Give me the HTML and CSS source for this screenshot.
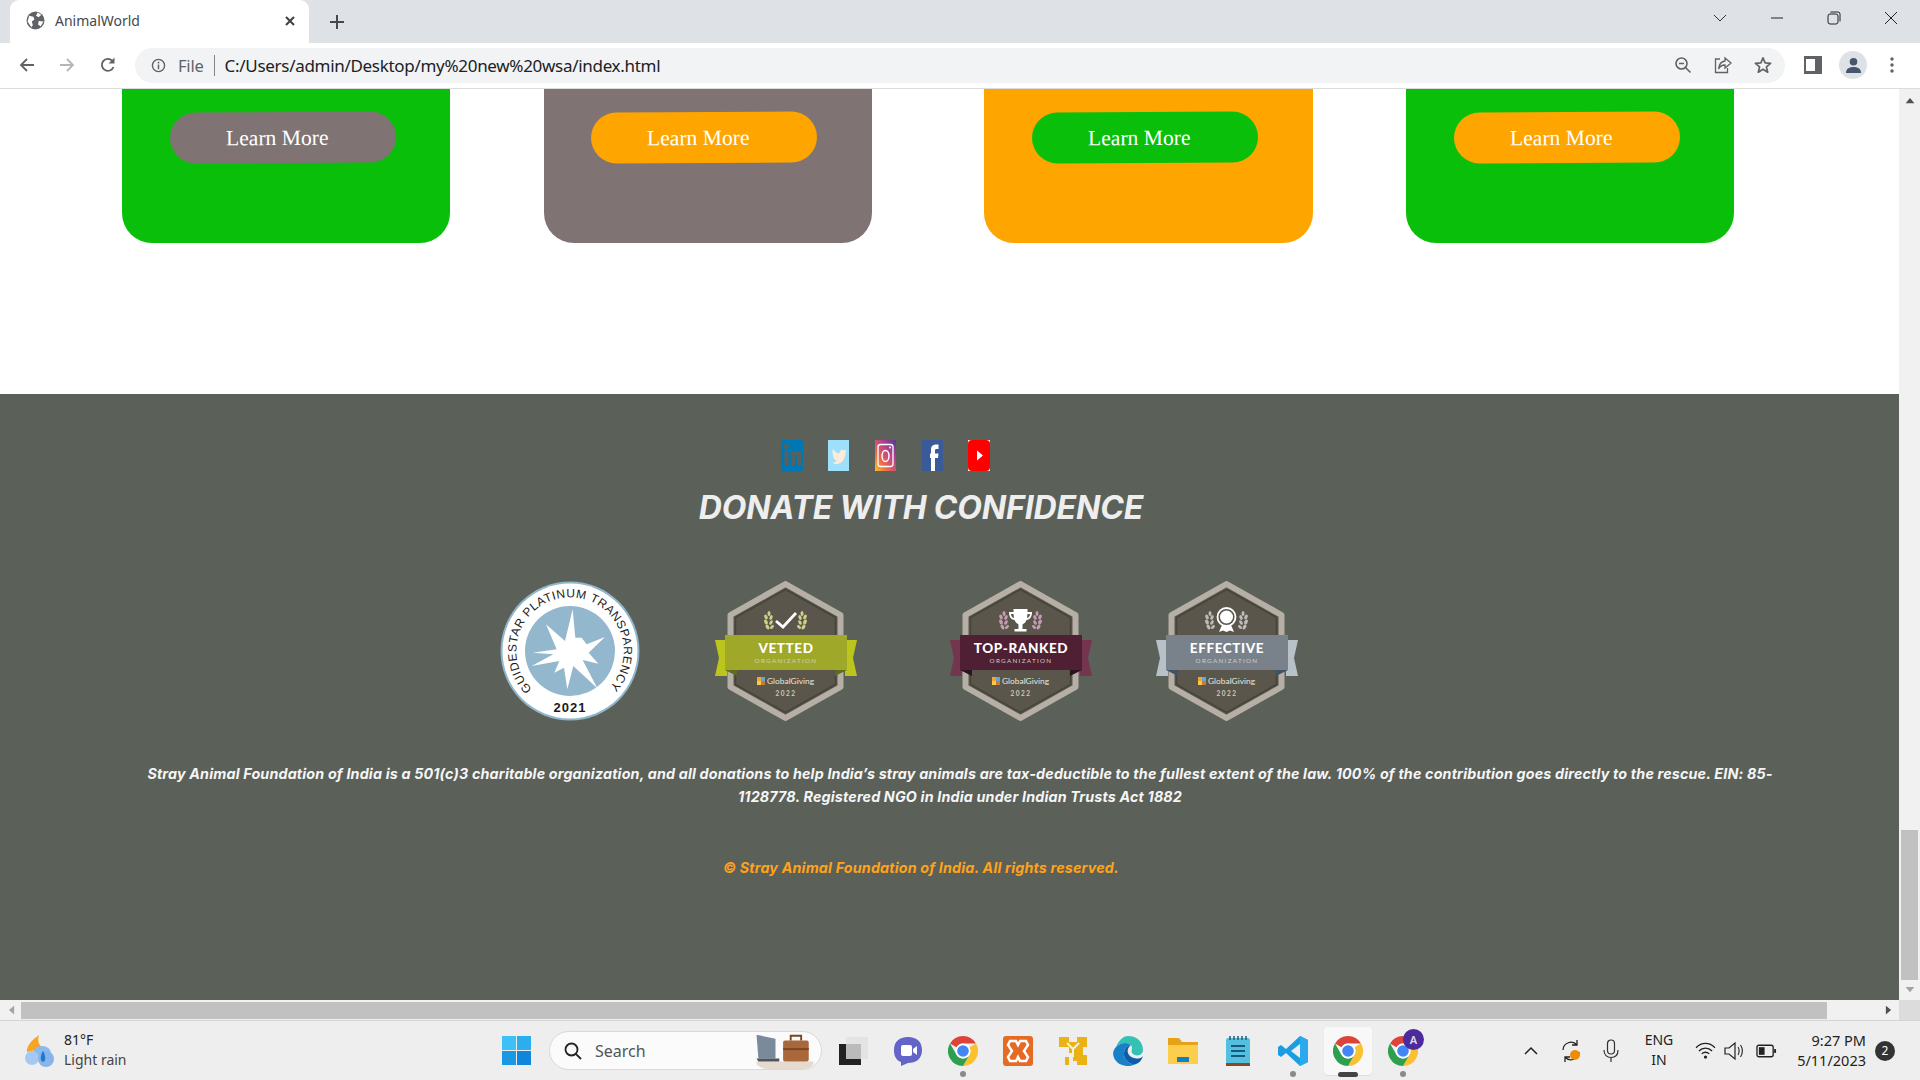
FILE: index.html
```html
<!DOCTYPE html>
<html lang="en">
<head>
<meta charset="utf-8">
<title>AnimalWorld</title>
<link rel="stylesheet" href="styles.css">
</head>
<body>
<svg class="defs" width="0" height="0" aria-hidden="true">
  <defs>
    <symbol id="chrome" viewBox="0 0 30 30">
      <path d="M15 0A15 15 0 0 1 28 7.500H15A7.500 7.500 0 0 0 8.500 11.300L2 7.500A15 15 0 0 1 15 0Z" fill="#db4437"/>
      <path d="M28 7.500A15 15 0 0 1 15 30L21.500 18.800A7.500 7.500 0 0 0 21.500 11.300Z" fill="#fbc02d"/>
      <path d="M2 7.500L8.500 18.800A7.500 7.500 0 0 0 21.500 18.800L15 30A15 15 0 0 1 2 7.500Z" fill="#2e9e4f"/>
      <circle cx="15" cy="15" r="7.500" fill="#fff"/>
      <circle cx="15" cy="15" r="5.800" fill="#4285f4"/>
    </symbol>
    <symbol id="laurel" viewBox="0 0 11 21">
      <g fill="currentColor">
        <ellipse cx="6" cy="2.500" rx="1.500" ry="2.500"/>
        <ellipse cx="3" cy="6" rx="1.600" ry="2.600" transform="rotate(-25 3 6)"/>
        <ellipse cx="8" cy="6.500" rx="1.500" ry="2.500" transform="rotate(25 8 6.500)"/>
        <ellipse cx="3" cy="11" rx="1.700" ry="2.700" transform="rotate(-25 3 11)"/>
        <ellipse cx="8" cy="11.500" rx="1.500" ry="2.500" transform="rotate(30 8 11.500)"/>
        <ellipse cx="4.500" cy="16" rx="1.700" ry="2.700" transform="rotate(-30 4.500 16)"/>
        <ellipse cx="9" cy="16" rx="1.400" ry="2.300" transform="rotate(45 9 16)"/>
      </g>
    </symbol>
    <symbol id="hex" viewBox="0 0 142 140">
      <path d="M70.500 3L125.500 34V106L70.500 137L15.500 106V34Z" fill="#5a564b" stroke="#b5afa6" stroke-width="6" stroke-linejoin="round"/>
      <path d="M70.500 8.500L120.500 36.500V103.500L70.500 131.500L20.500 103.500V36.500Z" fill="none" stroke="#45453c" stroke-width="1.500"/>
    </symbol>
    <symbol id="gg" viewBox="0 0 8 8">
      <rect width="4" height="4" fill="#f4a52c"/>
      <rect x="4" width="4" height="4" fill="#6ea2c9"/>
      <rect y="4" width="4" height="4" fill="#f6c94a"/>
      <rect x="4" y="4" width="4" height="4" fill="#c9793a"/>
    </symbol>
  </defs>
</svg>

<div class="screen">
  <header class="tabstrip">
    <div class="tab">
      <svg class="favicon" viewBox="0 0 18 18"><circle cx="9" cy="9" r="8.500" fill="#5f6368"/><path d="M3 4.500L7 5.500L8 8L5.500 10L6.500 13.500L5 15.500L1.500 10ZM11 1.500L14.500 3.500L12 6L9.500 4.500ZM12 9.500L16.500 10L14 14.500L11.500 13Z" fill="#fff"/></svg>
      <span class="tab-title">AnimalWorld</span>
      <svg class="tab-close" viewBox="0 0 12 12"><path d="M2 2L10 10M10 2L2 10" stroke="#3c4043" stroke-width="2"/></svg>
    </div>
    <svg class="newtab" viewBox="0 0 16 16"><path d="M8 1V15M1 8H15" stroke="#45494d" stroke-width="2"/></svg>
    <div class="winctrls">
      <svg class="winicon chev" viewBox="0 0 14 14"><path d="M1 4L7 10L13 4" fill="none" stroke="#333" stroke-width="1"/></svg>
      <svg class="winicon" viewBox="0 0 14 14"><path d="M1 7H13" stroke="#222" stroke-width="1"/></svg>
      <svg class="winicon" viewBox="0 0 14 14"><rect x="1" y="3" width="10" height="10" rx="2" fill="none" stroke="#222"/><path d="M3.500 1H11A2 2 0 0 1 13 3V10.500" fill="none" stroke="#222"/></svg>
      <svg class="winicon" viewBox="0 0 14 14"><path d="M1 1L13 13M13 1L1 13" stroke="#222" stroke-width="1"/></svg>
    </div>
  </header>

  <nav class="toolbar">
    <svg class="navicon" viewBox="0 0 18 18"><path d="M16 9H3M9 3L3 9L9 15" fill="none" stroke="#5f6368" stroke-width="1.800"/></svg>
    <svg class="navicon navicon-fwd" viewBox="0 0 18 18"><path d="M2 9H15M9 3L15 9L9 15" fill="none" stroke="#b4b7ba" stroke-width="1.800"/></svg>
    <svg class="navicon navicon-reload" viewBox="0 0 18 18"><path d="M14.500 11A6 6 0 1 1 13.300 4.800" fill="none" stroke="#5f6368" stroke-width="1.800"/><path d="M15.500 1.500V7.500H9.500Z" fill="#5f6368"/></svg>
    <div class="omnibox">
      <svg class="info" viewBox="0 0 16 16"><circle cx="8" cy="8" r="6.500" fill="none" stroke="#5f6368" stroke-width="1.500"/><path d="M8 7V12M8 4V5.800" stroke="#5f6368" stroke-width="1.600"/></svg>
      <span class="file-label">File</span>
      <span class="omni-sep"></span>
      <span class="url">C:/Users/admin/Desktop/my%20new%20wsa/index.html</span>
      <div class="omni-actions">
        <svg class="omniicon" viewBox="0 0 18 18"><circle cx="7.500" cy="7.500" r="5.500" fill="none" stroke="#5f6368" stroke-width="1.600"/><path d="M5 7.500H10M11.500 11.500L16.500 16.500" stroke="#5f6368" stroke-width="1.600"/></svg>
        <svg class="omniicon" viewBox="0 0 18 18"><path d="M6 3H1.500V16.500H13.500V12" fill="none" stroke="#5f6368" stroke-width="1.300"/><path d="M11 2L17 7L11 12V9C8 9 6 10 4.500 13C5 8.500 7.500 5.500 11 5Z" fill="none" stroke="#5f6368" stroke-width="1.300"/></svg>
        <svg class="omniicon" viewBox="0 0 18 18"><path d="M9 1.800L11.100 6.900L16.600 7.300L12.400 10.800L13.700 16.200L9 13.300L4.300 16.200L5.600 10.800L1.400 7.300L6.900 6.900Z" fill="none" stroke="#5f6368" stroke-width="1.700" stroke-linejoin="round"/></svg>
      </div>
    </div>
    <div class="tool-actions">
      <svg class="sidepanel" viewBox="0 0 18 18"><rect width="18" height="18" fill="#5f6368"/><rect x="2" y="3" width="9" height="12" fill="#fff"/></svg>
      <div class="avatar"><svg viewBox="0 0 18 18" class="avatar-icon"><circle cx="9" cy="5" r="4" fill="#47556f"/><path d="M1 17C1 12 5 10.500 9 10.500S17 12 17 17Z" fill="#47556f"/></svg></div>
      <svg class="kebab" viewBox="0 0 4 16"><circle cx="2" cy="2" r="1.700" fill="#5f6368"/><circle cx="2" cy="8" r="1.700" fill="#5f6368"/><circle cx="2" cy="14" r="1.700" fill="#5f6368"/></svg>
    </div>
  </nav>

  <div class="viewport">
    <main class="page">
      <section class="cards">
        <article class="card card-green card-a"><a class="btn btn-gray">Learn More</a></article>
        <article class="card card-gray card-b"><a class="btn btn-orange">Learn More</a></article>
        <article class="card card-orange card-c"><a class="btn btn-green">Learn More</a></article>
        <article class="card card-green card-d"><a class="btn btn-orange">Learn More</a></article>
      </section>

      <footer class="footer">
        <div class="socials">
          <svg class="social" viewBox="0 0 22 31"><rect width="22" height="31" rx="2" fill="#0077b5"/><rect x="3.500" y="11" width="4" height="15" fill="#5b6059"/><circle cx="5.500" cy="6.500" r="2.500" fill="#5b6059"/><path d="M10 11H14V13C15 11.500 16.500 10.800 18 11C20 11.400 20.500 13 20.500 15V26H16.500V16.500C16.500 15 14 15 14 16.500V26H10Z" fill="#5b6059"/></svg>
          <svg class="social" viewBox="0 0 21 31" preserveAspectRatio="none"><rect width="21" height="31" fill="#9edffb"/><path d="M5 9C7 12 9.500 13.500 11.500 13.500C11.500 10.500 14.500 8.500 16.500 10.500L18.500 9.500L17.500 12C17.500 18 14.500 24 8.500 24C6.500 24 5.500 23.500 4.500 22.500C6 22.500 7.500 22 8.500 21C6.500 20 5 17 5 15.500C4.500 13 4 11 5 9Z" fill="#fcebd9"/></svg>
          <svg class="social" viewBox="0 0 21 31" preserveAspectRatio="none">
            <defs><linearGradient id="iggrad" x1="0" y1="1" x2="1" y2="0"><stop offset="0" stop-color="#fdc11e"/><stop offset=".3" stop-color="#ee6a4d"/><stop offset=".65" stop-color="#b7418e"/><stop offset="1" stop-color="#4f3c98"/></linearGradient></defs>
            <rect width="21" height="31" fill="url(#iggrad)"/><rect x="3" y="4.500" width="15" height="22" rx="2.500" fill="none" stroke="#fff" stroke-width="1.300"/><ellipse cx="10.500" cy="16" rx="3.500" ry="5.500" fill="none" stroke="#fff" stroke-width="1.500"/><circle cx="15" cy="7.500" r="1" fill="#fff"/>
          </svg>
          <svg class="social" viewBox="0 0 21 31" preserveAspectRatio="none"><rect width="21" height="31" fill="#3b5a9a"/><path d="M9 31V18H8V13.500H9V9.500C9 6 11 4 16.500 4.500V9H14.500C13.500 9 13 9.500 13 10.500V13.500H16.500L16 18H13V31Z" fill="#fff"/></svg>
          <svg class="social social-yt" viewBox="0 0 22 31"><rect width="22" height="31" fill="#fff"/><rect width="22" height="31" rx="4" fill="#f00"/><path d="M9 10.500L15 15.500L9 20.500Z" fill="#fff"/></svg>
        </div>

        <h2 class="donate">DONATE WITH CONFIDENCE</h2>

        <div class="badges">
          <svg class="badge badge-guide" viewBox="0 0 140 140">
            <circle cx="70" cy="70" r="69.500" fill="#8fb6cb"/>
            <circle cx="70" cy="70" r="67.500" fill="#fff"/>
            <circle cx="70" cy="70" r="45" fill="#93b7cd"/>
            <path id="guidearc" d="M32 108A53.700 53.700 0 1 1 108 108" fill="none"/>
            <text class="guide-ring"><textPath href="#guidearc" textLength="250">GUIDESTAR PLATINUM TRANSPARENCY</textPath></text>
            <text class="guide-year" x="70" y="131" text-anchor="middle">2021</text>
            <polygon transform="translate(-10 -11.670) scale(.3333)" fill="#fff" points="248,120 256,205 275,205 290,225 345,203 296,250 325,283 278,272 322,357 250,290 232,360 222,295 193,310 208,275 125,290 190,255 128,250 200,240 168,165 225,215"/>
          </svg>

          <svg class="badge badge-vetted" viewBox="0 0 142 140">
            <use href="#hex" width="142" height="140"/>
            <use href="#laurel" x="48" y="30" width="11" height="21" class="laurel-gold"/>
            <use href="#laurel" x="82" y="30" width="11" height="21" class="laurel-gold" transform="matrix(-1 0 0 1 175 0)"/>
            <path d="M61 40L68 46L81 32" fill="none" stroke="#fff" stroke-width="2.800"/>
            <polygon points="0,59 12,59 12,95 0,95 4,77" fill="#bcc41e"/>
            <polygon points="142,59 130,59 130,95 142,95 138,77" fill="#bcc41e"/>
            <polygon points="10,89 22,89 22,95" fill="#5f6b1d"/>
            <polygon points="132,89 120,89 120,95" fill="#5f6b1d"/>
            <rect x="10" y="54" width="122" height="35" fill="#a0a82a"/>
            <text class="b-title" x="71" y="72" text-anchor="middle">VETTED</text>
            <text class="b-org" x="71" y="82" text-anchor="middle">ORGANIZATION</text>
            <use href="#gg" x="42" y="96" width="8" height="8"/>
            <text class="b-gg" x="52" y="103">GlobalGiving</text>
            <text class="b-year" x="71" y="115" text-anchor="middle">2022</text>
          </svg>

          <svg class="badge badge-top" viewBox="0 0 142 140">
            <use href="#hex" width="142" height="140"/>
            <use href="#laurel" x="48" y="30" width="11" height="21" class="laurel-pink"/>
            <use href="#laurel" x="82" y="30" width="11" height="21" class="laurel-pink" transform="matrix(-1 0 0 1 175 0)"/>
            <path d="M63.500 28H77.500V31H82C82 36 80 38.500 76.500 39C75.500 42 73 43 72.500 43.500V48H76.500V50.500H64.500V48H68.500V43.500C68 43 65.500 42 64.500 39C61 38.500 59 36 59 31H63.500ZM61 33C61 35 62 36.500 64 37L63.500 33ZM80 33H77.500L77 37C79 36.500 80 35 80 33Z" fill="#fff" fill-rule="evenodd"/>
            <polygon points="0,59 12,59 12,95 0,95 4,77" fill="#74354e"/>
            <polygon points="142,59 130,59 130,95 142,95 138,77" fill="#74354e"/>
            <polygon points="10,89 22,89 22,95" fill="#2d1220"/>
            <polygon points="132,89 120,89 120,95" fill="#2d1220"/>
            <rect x="10" y="54" width="122" height="35" fill="#4f2033"/>
            <text class="b-title" x="71" y="72" text-anchor="middle">TOP-RANKED</text>
            <text class="b-org" x="71" y="82" text-anchor="middle">ORGANIZATION</text>
            <use href="#gg" x="42" y="96" width="8" height="8"/>
            <text class="b-gg" x="52" y="103">GlobalGiving</text>
            <text class="b-year" x="71" y="115" text-anchor="middle">2022</text>
          </svg>

          <svg class="badge badge-eff" viewBox="0 0 142 140">
            <use href="#hex" width="142" height="140"/>
            <use href="#laurel" x="48" y="30" width="11" height="21" class="laurel-gray"/>
            <use href="#laurel" x="82" y="30" width="11" height="21" class="laurel-gray" transform="matrix(-1 0 0 1 175 0)"/>
            <path d="M66 44L63 51L67 49.500L70.500 51L74 49.500L78 51L75 44Z" fill="#fff"/>
            <circle cx="70.500" cy="36" r="9" fill="none" stroke="#fff" stroke-width="1.800"/>
            <circle cx="70.500" cy="36" r="6.500" fill="#fff"/>
            <polygon points="0,59 12,59 12,95 0,95 4,77" fill="#b8c1c8"/>
            <polygon points="142,59 130,59 130,95 142,95 138,77" fill="#b8c1c8"/>
            <polygon points="10,89 22,89 22,95" fill="#3f5366"/>
            <polygon points="132,89 120,89 120,95" fill="#3f5366"/>
            <rect x="10" y="54" width="122" height="35" fill="#79828b"/>
            <text class="b-title" x="71" y="72" text-anchor="middle">EFFECTIVE</text>
            <text class="b-org" x="71" y="82" text-anchor="middle">ORGANIZATION</text>
            <use href="#gg" x="42" y="96" width="8" height="8"/>
            <text class="b-gg" x="52" y="103">GlobalGiving</text>
            <text class="b-year" x="71" y="115" text-anchor="middle">2022</text>
          </svg>
        </div>

        <p class="legal">Stray Animal Foundation of India is a 501(c)3 charitable organization, and all donations to help India’s stray animals are tax-deductible to the fullest extent of the law. 100% of the contribution goes directly to the rescue. EIN: 85-1128778. Registered NGO in India under Indian Trusts Act 1882</p>
        <p class="copyright">© Stray Animal Foundation of India. All rights reserved.</p>
      </footer>
    </main>

    <aside class="vscroll">
      <svg class="vbtn" viewBox="0 0 12 8"><path d="M6 1L11 7H1Z" fill="#505050"/></svg>
      <div class="vthumb"></div>
      <svg class="vbtn" viewBox="0 0 12 8"><path d="M6 7L11 1H1Z" fill="#a3a3a3"/></svg>
    </aside>
  </div>

  <div class="hscroll">
    <svg class="hbtn" viewBox="0 0 8 12"><path d="M1 6L7 1V11Z" fill="#a3a3a3"/></svg>
    <div class="hthumb"></div>
    <svg class="hbtn hbtn-r" viewBox="0 0 8 12"><path d="M7 6L1 1V11Z" fill="#505050"/></svg>
    <div class="corner"></div>
  </div>

  <div class="taskbar">
    <div class="weather">
      <svg class="weather-icon" viewBox="0 0 30 32">
        <path d="M14 0C8 4 1 11 2 17L20 13C14 12 12 6 14 0Z" fill="#f6a623"/>
        <ellipse cx="17" cy="18" rx="9" ry="7" fill="#8cb9ee"/>
        <circle cx="7" cy="23" r="7" fill="#a6c8f3"/>
        <circle cx="21" cy="24" r="8" fill="#88b4ea"/>
        <path d="M18 16C15 21 15 26 18 27C21 26 21 21 18 16Z" fill="#1f77d0"/>
      </svg>
      <div class="weather-text"><span>81°F</span><span>Light rain</span></div>
    </div>

    <svg class="winlogo" viewBox="0 0 29 29"><rect width="14" height="14" fill="#3cc0f5"/><rect x="15" width="14" height="14" fill="#2aaeee"/><rect y="15" width="14" height="14" fill="#1b98e4"/><rect x="15" y="15" width="14" height="14" fill="#0e86dc"/></svg>

    <div class="search">
      <svg class="search-icon" viewBox="0 0 18 18"><circle cx="7.500" cy="7.500" r="6" fill="none" stroke="#222" stroke-width="1.800"/><path d="M11.800 11.800L17 17" stroke="#222" stroke-width="1.800"/></svg>
      <span class="search-label">Search</span>
      <svg class="search-art" viewBox="0 0 60 40">
        <path d="M0 31H60V34C56 39 50 39 46 39H14C8 39 4 38 0 34Z" fill="#e4dacd"/>
        <path d="M0 3L20 7V28H2Z" fill="#7a8a9a"/><path d="M0 28H24V31H2Z" fill="#50565e"/>
        <rect x="28" y="9" width="27" height="22" rx="2" fill="#a8683c"/><path d="M36 9V4H47V9" fill="none" stroke="#7a4522" stroke-width="2"/><rect x="28" y="17" width="27" height="2" fill="#7a4522"/>
      </svg>
    </div>

    <div class="apps">
      <div class="app"><svg class="ico" viewBox="0 0 30 30"><rect x="8" y="1" width="22" height="22" fill="#e4e4e4"/><rect x="1" y="8" width="22" height="21" fill="#222"/><rect x="8" y="8" width="15" height="15" fill="#bbb"/></svg></div>
      <div class="app"><svg class="ico" viewBox="0 0 30 30"><path d="M15 1C24 1 29 6 29 14C29 23 23 27 15 27L8 30V26C3 24 1 20 1 14C1 6 6 1 15 1Z" fill="#6264c7"/><rect x="8" y="9" width="11" height="11" rx="2" fill="#fff"/><path d="M20 13L24 10V19L20 16Z" fill="#fff"/></svg></div>
      <div class="app app-dot"><svg class="ico"><use href="#chrome"/></svg></div>
      <div class="app"><svg class="ico" viewBox="0 0 30 30"><rect width="30" height="30" rx="3" fill="#e56a24"/><path d="M7 5H13L15 9L17 5H23L25 9L21 15L25 21L23 25H17L15 21L13 25H7L5 21L9 15L5 9Z" fill="none" stroke="#fff" stroke-width="2.500"/></svg></div>
      <div class="app"><svg class="ico" viewBox="0 0 30 30"><path d="M1 1H11V6H19V1H29V11H25V19H29V29H19V25H15V17H11V11H1Z" fill="#eab217"/><path d="M7 21H11V29H7Z" fill="#eab217"/><path d="M9 7L15 13L21 7M15 13V21" stroke="#f7f3d8" stroke-width="2" fill="none"/></svg></div>
      <div class="app"><svg class="ico" viewBox="0 0 30 30"><path d="M15 0C24 0 30 6 30 14C30 20 22 21 19 17C18 14 20 12 18 9C15 6 8 6 3 11C6 4 10 0 15 0Z" fill="#35c1b4"/><path d="M3 11C8 6 15 6 18 9C14 9 11 13 11 18C11 24 16 29 23 28C18 31 9 31 4 26C-1 21 -1 15 3 11Z" fill="#1a7fc9"/><path d="M11 18C11 24 16 29 23 28C26 27 29 24 30 20C27 24 19 23 16 19C14 16 14 12 18 9C14 9 11 13 11 18Z" fill="#0c5ea8"/></svg></div>
      <div class="app"><svg class="ico" viewBox="0 0 30 30"><path d="M0 2H11L14 6H30V28H0Z" fill="#e6a31a"/><path d="M0 9H30V28H0Z" fill="#fdce4c"/><rect x="9" y="21" width="12" height="5" fill="#0f7fd0"/></svg></div>
      <div class="app"><svg class="ico" viewBox="0 0 30 30"><rect x="3" y="2" width="24" height="26" rx="2" fill="#55bfe0"/><rect x="3" y="27" width="24" height="3" fill="#8a4a1f"/><path d="M7 0V4M11 0V4M15 0V4M19 0V4M23 0V4" stroke="#2a5a70" stroke-width="1.500"/><path d="M8 10H22M8 15H22M8 20H22" stroke="#175a7c" stroke-width="2"/></svg></div>
      <div class="app app-dot"><svg class="ico" viewBox="0 0 30 30"><path d="M22 0L30 4V26L22 30L8 17L3 21L0 19V11L3 9L8 13Z" fill="#1b9de2"/><path d="M22 0L30 4V26L22 30Z" fill="#2aa9ee"/><path d="M22 8L13 15L22 22Z" fill="#eeeeee"/></svg></div>
      <div class="app app-active"><svg class="ico"><use href="#chrome"/></svg></div>
      <div class="app app-dot app-badged"><svg class="ico"><use href="#chrome"/></svg><span class="pbadge">A</span></div>
    </div>

    <div class="tray">
      <svg class="tray-chev" viewBox="0 0 14 10"><path d="M1 8L7 2L13 8" fill="none" stroke="#222" stroke-width="1.500"/></svg>
      <svg class="tray-sync" viewBox="0 0 22 24"><path d="M3 11A8 8 0 0 1 17 6M17 1V6H12M19 13A8 8 0 0 1 5 18M5 23V18H10" fill="none" stroke="#222" stroke-width="1.300"/><circle cx="15" cy="16" r="5" fill="#f08c00"/></svg>
      <svg class="tray-mic" viewBox="0 0 16 24"><rect x="4.500" y="1" width="7" height="14" rx="3.500" fill="none" stroke="#333" stroke-width="1.200"/><path d="M1 11C1 16 4 18.500 8 18.500S15 16 15 11M8 18.500V23" fill="none" stroke="#333" stroke-width="1.200"/></svg>
      <div class="lang"><span>ENG</span><span>IN</span></div>
      <svg class="tray-wifi" viewBox="0 0 22 18"><path d="M1 6C7 0 15 0 21 6M4 9.500C8 5.500 14 5.500 18 9.500M7 12.500C9.500 10.500 12.500 10.500 15 12.500" fill="none" stroke="#222" stroke-width="1.400"/><circle cx="11" cy="16" r="1.700" fill="#222"/></svg>
      <svg class="tray-vol" viewBox="0 0 20 20"><path d="M1 7H5L11 2V18L5 13H1Z" fill="none" stroke="#222" stroke-width="1.200"/><path d="M14 6C15.500 8 15.500 12 14 14M16.500 4C19 7.500 19 12.500 16.500 16" fill="none" stroke="#222" stroke-width="1.100"/></svg>
      <svg class="tray-batt" viewBox="0 0 22 14"><rect x="1" y="1" width="17" height="12" rx="2" fill="none" stroke="#222" stroke-width="1.400"/><rect x="3" y="3" width="6" height="8" fill="#222"/><rect x="19" y="5" width="2" height="4" fill="#222"/></svg>
      <div class="clock"><span>9:27 PM</span><span>5/11/2023</span></div>
      <span class="notif">2</span>
    </div>
  </div>
</div>
</body>
</html>
```

FILE: styles.css
```css
* { box-sizing: border-box; }
html, body { margin: 0; padding: 0; width: 1920px; height: 1080px; overflow: hidden; background: #fff; }
body { font-family: "Noto Sans", "Open Sans", sans-serif; }
.defs { position: absolute; }
.screen { width: 1920px; height: 1080px; display: flex; flex-direction: column; overflow: hidden; }

/* tab strip */
.tabstrip { height: 43px; flex: none; background: #dee1e6; display: flex; align-items: flex-end; padding-left: 10px; }
.tab { width: 299px; height: 43px; background: #fff; border-radius: 9px 9px 0 0; display: flex; align-items: center; padding: 0 13px 2px 16px; }
.favicon { width: 19px; height: 19px; flex: none; }
.tab-title { font-size: 14px; color: #45494d; margin-left: 10px; flex: 1; }
.tab-close { width: 12px; height: 12px; }
.newtab { width: 16px; height: 16px; margin: 0 0 13px 20px; }
.winctrls { margin-left: auto; display: flex; align-items: center; align-self: flex-start; gap: 43px; padding: 11px 22px 0 0; }
.winicon { width: 14px; height: 14px; }

/* toolbar */
.toolbar { height: 46px; flex: none; background: #fff; border-bottom: 1px solid #dcdcdc; display: flex; align-items: center; padding: 0 0 1px 18px; }
.navicon { width: 18px; height: 18px; margin-right: 22px; flex: none; }
.navicon-fwd { margin-right: 23px; }
.navicon-reload { margin-right: 18px; }
.omnibox { width: 1650px; height: 35px; background: #f1f3f4; border-radius: 18px; display: flex; align-items: center; padding: 0 13px 0 16px; }
.info { width: 15px; height: 15px; flex: none; }
.file-label { font-size: 16.500px; color: #5f6368; margin-left: 12px; letter-spacing: -.2px; }
.omni-sep { width: 1px; height: 21px; background: #80868b; margin: 0 10px 0 10px; }
.url { font-size: 17px; color: #202124; white-space: nowrap; letter-spacing: -.3px; }
.omni-actions { margin-left: auto; display: flex; gap: 22px; align-items: center; }
.omniicon { width: 18px; height: 18px; }
.tool-actions { display: flex; align-items: center; margin-left: 19px; }
.sidepanel { width: 18px; height: 18px; }
.avatar { width: 28px; height: 28px; border-radius: 50%; background: #dee1e6; margin-left: 17px; display: flex; align-items: center; justify-content: center; }
.avatar-icon { width: 17px; height: 17px; }
.kebab { width: 4px; height: 16px; margin-left: 23px; }

/* page */
.viewport { height: 911px; flex: none; display: flex; }
.page { width: 1899px; overflow: hidden; background: #fff; }
.cards { height: 154px; display: flex; padding-left: 122px; }
.card { width: 328px; height: 154px; border-radius: 0 0 30px 30px; padding: 23px 0 0 48px; flex: none; }
.card-b { margin-left: 94px; padding-left: 47px; }
.card-c { margin-left: 112px; width: 329px; }
.card-d { margin-left: 93px; }
.card-green { background: #0abf0a; }
.card-gray { background: #807373; }
.card-orange { background: #ffa500; }
.btn { display: block; width: 226px; height: 51px; border-radius: 26px; color: #fff; font-family: "Liberation Serif", serif; font-size: 21.600px; line-height: 53px; padding-left: 56px; transform: rotate(-.3deg); }
.btn-gray { background: #807373; }
.btn-orange { background: #ffa500; }
.btn-green { background: #0abf0a; }

/* footer */
.footer { margin-top: 151px; height: 606px; background: #5b6059; padding-top: 46px; font-family: Inter, "Noto Sans", sans-serif; }
.socials { display: flex; gap: 26px; padding-left: 781px; height: 31px; }
.social { width: 21px; height: 31px; flex: none; }
.social:first-child, .social-yt { width: 22px; }
.social:first-child { margin-right: -1px; }
.social-yt { margin-left: -1px; }
.donate { margin: 18px 0 0; width: 1842px; text-align: center; font-size: 32px; line-height: 38px; font-weight: 700; font-style: italic; color: #eeeeee; letter-spacing: -.15px; }
.badges { display: flex; align-items: flex-start; margin-top: 54px; padding-left: 500px; }
.badge { height: 140px; flex: none; display: block; }
.badge-guide { width: 140px; }
.badge-vetted, .badge-top, .badge-eff { width: 142px; }
.badge-vetted { margin-left: 75px; }
.badge-top { margin-left: 93px; }
.badge-eff { margin-left: 64px; }
.guide-ring { font-family: "Liberation Sans", sans-serif; font-size: 12px; fill: #1b1b1b; }
.guide-year { font-family: "Liberation Sans", sans-serif; font-size: 13px; font-weight: 700; letter-spacing: 1px; fill: #1b1b1b; }
.laurel-gold { color: #cfcf8a; }
.laurel-pink { color: #c69cb0; }
.laurel-gray { color: #bcbcb8; }
.b-title { font-family: Lato, sans-serif; font-size: 13.500px; font-weight: 900; letter-spacing: .6px; fill: #fff; }
.b-org { font-family: Lato, sans-serif; font-size: 6.300px; letter-spacing: 1.300px; fill: #cfcfc4; }
.b-gg { font-family: Lato, sans-serif; font-size: 8.400px; fill: #e6e6dc; }
.b-year { font-family: Lato, sans-serif; font-size: 6.500px; font-weight: 700; letter-spacing: 1.500px; fill: #cfcbbf; }
.legal { margin: 41px 0 0 146px; width: 1628px; text-align: center; font-size: 14.300px; line-height: 23px; font-weight: 700; font-style: italic; color: #f5f5f5; letter-spacing: .17px; }
.copyright { margin: 48px 0 0; width: 1842px; text-align: center; font-size: 14.300px; line-height: 23px; font-weight: 700; font-style: italic; color: #ffa31a; letter-spacing: .17px; }

/* scrollbars */
.vscroll { width: 21px; background: #f1f1f1; display: flex; flex-direction: column; align-items: center; padding: 8px 0 7px; }
.vbtn { width: 12px; height: 7px; flex: none; }
.vthumb { width: 17px; height: 150px; background: #c1c1c1; margin-top: auto; margin-bottom: 6px; }
.hscroll { height: 20px; flex: none; background: #f1f1f1; display: flex; align-items: center; padding-left: 8px; }
.hbtn { width: 7px; height: 12px; flex: none; }
.hthumb { width: 1806px; height: 17px; background: #c1c1c1; margin-left: 6px; }
.hbtn-r { margin-left: 58px; }
.corner { width: 21px; height: 20px; background: #dcdcdc; margin-left: auto; }

/* taskbar */
.taskbar { height: 60px; flex: none; background: #eeeeee; border-top: 1px solid #d4d4d4; display: flex; align-items: center; padding-left: 25px; }
.weather { display: flex; align-items: center; width: 477px; flex: none; }
.weather-icon { width: 30px; height: 32px; }
.weather-text { display: flex; flex-direction: column; margin: -2px 0 0 9px; font-size: 14px; line-height: 20px; color: #222; }
.weather-text span:last-child { color: #444; }
.winlogo { width: 29px; height: 29px; flex: none; }
.search { width: 273px; height: 39px; border-radius: 20px; background: #fbfbfb; border: 1px solid #d9d9d9; margin-left: 18px; display: flex; align-items: center; padding: 0 6px 0 14px; flex: none; }
.search-icon { width: 18px; height: 18px; flex: none; }
.search-label { font-size: 16px; color: #555; margin-left: 13px; }
.search-art { width: 60px; height: 38px; margin-left: auto; }
.apps { display: flex; margin-left: 3px; height: 100%; }
.app { width: 55px; height: 59px; display: flex; align-items: center; justify-content: center; position: relative; flex: none; }
.ico { width: 30px; height: 30px; }
.app-dot::after { content: ""; position: absolute; left: 50%; margin-left: -3px; bottom: 3px; width: 6px; height: 6px; border-radius: 50%; background: #8a8a8a; }
.app-active::before { content: ""; position: absolute; left: 4px; top: 6px; width: 48px; height: 48px; background: #f8f8f8; border-radius: 4px; box-shadow: 0 1px 1px #ddd; }
.app-active .ico { position: relative; }
.app-active::after { content: ""; position: absolute; left: 50%; margin-left: -10px; bottom: 3px; width: 20px; height: 5px; border-radius: 3px; background: #444; }
.pbadge { position: absolute; left: 28px; top: 8px; width: 21px; height: 21px; border-radius: 50%; background: #4d2a9e; color: #ddd; font-size: 11px; line-height: 21px; text-align: center; font-weight: 600; }
.tray { display: flex; align-items: center; flex: 1; height: 100%; position: relative; }
.tray-chev { width: 14px; height: 10px; margin-left: 94px; }
.tray-sync { width: 22px; height: 24px; margin-left: 22px; }
.tray-mic { width: 16px; height: 24px; margin-left: 21px; }
.lang { display: flex; flex-direction: column; align-items: center; width: 40px; margin: -2px 0 0 20px; font-size: 14px; line-height: 20px; color: #222; }
.tray-wifi { width: 21px; height: 17px; margin-left: 16px; }
.tray-vol { width: 20px; height: 20px; margin-left: 8px; }
.tray-batt { width: 21px; height: 14px; margin-left: 12px; }
.clock { display: flex; flex-direction: column; align-items: flex-end; width: 87px; margin: -2px 0 0 2px; font-size: 14.500px; line-height: 20px; color: #222; }
.notif { width: 20px; height: 20px; border-radius: 50%; background: #333; color: #fff; font-size: 12px; line-height: 20px; text-align: center; margin-left: 9px; }
```
